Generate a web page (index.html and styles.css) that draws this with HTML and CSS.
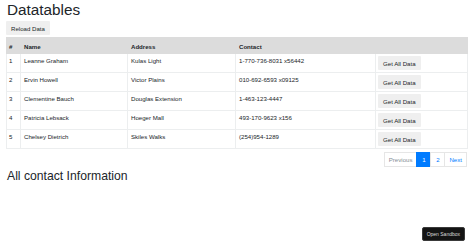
FILE: index.html
```html
<!DOCTYPE html>
<html lang="en">
<head>
    <meta charset="UTF-8">
    <meta name="viewport" content="width=device-width, initial-scale=1.0">
    <title>Datatables</title>
    <link rel="stylesheet" href="styles.css">
</head>
<body>
    <div class="app">
        <h1 class="title">Datatables</h1>
        <button class="btn">Reload Data</button>
        <table class="grid">
            <thead>
                <tr>
                    <th class="c-id">#</th>
                    <th class="c-name">Name</th>
                    <th class="c-addr">Address</th>
                    <th class="c-contact">Contact</th>
                    <th class="c-act"></th>
                </tr>
            </thead>
            <tbody>
                <tr>
                    <td>1</td>
                    <td>Leanne Graham</td>
                    <td>Kulas Light</td>
                    <td>1-770-736-8031 x56442</td>
                    <td><button class="btn">Get All Data</button></td>
                </tr>
                <tr>
                    <td>2</td>
                    <td>Ervin Howell</td>
                    <td>Victor Plains</td>
                    <td>010-692-6593 x09125</td>
                    <td><button class="btn">Get All Data</button></td>
                </tr>
                <tr>
                    <td>3</td>
                    <td>Clementine Bauch</td>
                    <td>Douglas Extension</td>
                    <td>1-463-123-4447</td>
                    <td><button class="btn">Get All Data</button></td>
                </tr>
                <tr>
                    <td>4</td>
                    <td>Patricia Lebsack</td>
                    <td>Hoeger Mall</td>
                    <td>493-170-9623 x156</td>
                    <td><button class="btn">Get All Data</button></td>
                </tr>
                <tr>
                    <td>5</td>
                    <td>Chelsey Dietrich</td>
                    <td>Skiles Walks</td>
                    <td>(254)954-1289</td>
                    <td><button class="btn">Get All Data</button></td>
                </tr>
            </tbody>
        </table>
        <ul class="pager">
            <li class="pg disabled">Previous</li>
            <li class="pg num active">1</li>
            <li class="pg num">2</li>
            <li class="pg">Next</li>
        </ul>
        <h2 class="subtitle">All contact Information</h2>
    </div>
    <a class="sandbox">Open Sandbox</a>
</body>
</html>
```

FILE: styles.css
```css
@charset "utf-8";
* {
    margin: 0;
    padding: 0;
    box-sizing: border-box;
}
body {
    font-family: "Liberation Sans", Arial, sans-serif;
    font-size: 6.1px;
    color: #212529;
    background-color: #fff;
}
.app {
    padding: 0 6px;
}
.title {
    font-size: 15.3px;
    font-weight: 500;
    line-height: 1.2;
    padding: 1px 0 2px 1px;
}
.btn {
    font-family: inherit;
    font-size: 6.1px;
    color: #212529;
    background-color: #efefef;
    border: none;
    border-radius: 1px;
    padding: 0 5px;
    height: 14px;
}
.grid {
    width: 462px;
    margin-top: 2px;
    border-collapse: collapse;
    border: 1px solid #eceeef;
}
.grid th,
.grid td {
    text-align: left;
    vertical-align: top;
    border: 1px solid #eceeef;
    padding: 2px 3px;
    line-height: 9px;
}
.grid thead th {
    background-color: #dcdcdc;
    border-color: #dcdcdc;
    font-weight: bold;
    height: 16px;
    padding-top: 4px;
}
.grid tbody td {
    height: 19px;
}
.grid td:first-child,
.grid th:first-child {
    padding-left: 2px;
}
.grid td:last-child {
    padding: 2px;
}
.c-id { width: 14px; }
.c-name { width: 107px; }
.c-addr { width: 108px; }
.c-contact { width: 140px; }
.pager {
    list-style: none;
    display: flex;
    justify-content: flex-end;
    margin: 3px 1px 0 0;
}
.pg {
    height: 15px;
    line-height: 13px;
    padding: 0 4px;
    border: 1px solid #e6e6e6;
    margin-left: -1px;
    color: #007bff;
}
.pg.num {
    width: 15px;
    padding: 0;
    text-align: center;
}
.pg.disabled {
    color: #868e96;
}
.pg.active {
    background-color: #007bff;
    border-color: #007bff;
    color: #fff;
}
.subtitle {
    font-size: 12.2px;
    font-weight: 500;
    line-height: 1.2;
    padding: 2px 0 0 1px;
}
.sandbox {
    position: fixed;
    right: 9px;
    bottom: 7px;
    height: 14px;
    line-height: 12px;
    padding: 0 4px;
    font-size: 5px;
    color: #ddd;
    background-color: #141414;
    border: 1px solid #3a3a3a;
    border-radius: 2px;
}
```
